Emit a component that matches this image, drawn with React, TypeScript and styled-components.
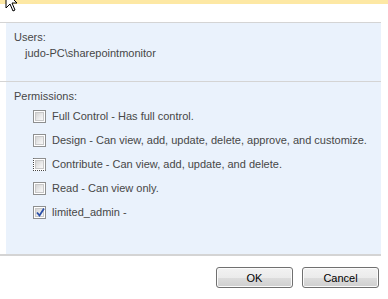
import React from "react";
import styled, { createGlobalStyle } from "styled-components";

const Global = createGlobalStyle`
  html, body { margin: 0; padding: 0; background: #ffffff; }
  body { font-family: "Liberation Sans", Arial, sans-serif; font-size: 11px; color: #474747; }
`;

const Page = styled.div`
  position: relative;
  width: 388px;
  height: 299px;
  overflow: hidden;
  background: #ffffff;
`;

const Notice = styled.div`
  height: 4px;
  background: #fde8a4;
`;

const Gap = styled.div`
  height: 18px;
`;

const Section = styled.div<{ $border: number }>`
  width: 381px;
  border-top: ${(p) => p.$border}px solid #d4d4d4;
  padding-left: 6px;
  box-sizing: border-box;
`;

const Panel = styled.div<{ $top: number; $bottom: number }>`
  background: #eaf2fc;
  padding: ${(p) => p.$top}px 0 ${(p) => p.$bottom}px 8px;
`;

const Label = styled.div`
  line-height: 16px;
  height: 16px;
`;

const UserName = styled.div`
  line-height: 16px;
  padding-left: 11px;
`;

const Row = styled.label`
  display: flex;
  align-items: center;
  height: 24px;
  padding-left: 19px;
  gap: 6px;
`;

const Box = styled.span<{ $focus?: boolean }>`
  position: relative;
  width: 13px;
  height: 13px;
  box-sizing: border-box;
  border: 1px solid #8e8f8f;
  border-left-style: ${(p) => (p.$focus ? "dotted" : "solid")};
  border-bottom-style: ${(p) => (p.$focus ? "dotted" : "solid")};
  border-left-color: ${(p) => (p.$focus ? "#444" : "#8e8f8f")};
  border-bottom-color: ${(p) => (p.$focus ? "#444" : "#8e8f8f")};
  background: #ffffff;
  padding: 1px;
  display: flex;
  flex-shrink: 0;
`;

const BoxInner = styled.span`
  flex: 1;
  background: linear-gradient(135deg, #d4d4d4 0%, #ececec 60%, #f8f8f8 100%);
  border: 1px solid #c8c8c8;
`;

const Check = styled.svg`
  position: absolute;
  left: 1px;
  top: 0px;
`;

const Text = styled.span`
  white-space: nowrap;
`;

const Footer = styled.div`
  width: 381px;
  border-top: 2px solid #d4d4d4;
  display: flex;
  justify-content: flex-end;
  gap: 9px;
  padding: 11px 2px 0 0;
  box-sizing: border-box;
`;

const Button = styled.button`
  width: 77px;
  height: 21px;
  box-sizing: border-box;
  border: 1px solid #707070;
  border-radius: 3px;
  background: linear-gradient(#f2f2f2 0%, #ebebeb 50%, #dddddd 51%, #cfcfcf 100%);
  box-shadow: inset 0 0 0 1px #fbfbfb;
  font-family: "Liberation Sans", Arial, sans-serif;
  font-size: 11px;
  color: #000000;
  padding: 0;
`;

const Cursor = styled.svg`
  position: absolute;
  left: 5px;
  top: -9px;
`;

const perms = [
  { text: "Full Control - Has full control.", checked: false, focus: false },
  { text: "Design - Can view, add, update, delete, approve, and customize.", checked: false, focus: false },
  { text: "Contribute - Can view, add, update, and delete.", checked: false, focus: true },
  { text: "Read - Can view only.", checked: false, focus: false },
  { text: "limited_admin -", checked: true, focus: false },
];

export default function App() {
  return (
    <Page>
      <Global />
      <Notice />
      <Gap />
      <Section $border={1}>
        <Panel $top={6} $bottom={20}>
          <Label>Users:</Label>
          <UserName>judo-PC\sharepointmonitor</UserName>
        </Panel>
      </Section>
      <Section $border={1}>
        <Panel $top={6} $bottom={30}>
          <Label>Permissions:</Label>
          {perms.map((p) => (
            <Row key={p.text}>
              <Box $focus={p.focus}>
                <BoxInner />
                {p.checked && (
                  <Check width="11" height="11" viewBox="0 0 11 11">
                    <path d="M2 5.5 L4.5 8.5 L9 1.5" fill="none" stroke="#2a4fa8" strokeWidth="1.8" />
                  </Check>
                )}
              </Box>
              <Text>{p.text}</Text>
            </Row>
          ))}
        </Panel>
      </Section>
      <Footer>
        <Button>OK</Button>
        <Button>Cancel</Button>
      </Footer>
      <Cursor width="14" height="22" viewBox="0 0 14 22">
        <path d="M1 1 L1 17 L5 13 L8 20 L10 19 L7 12 L12 12 Z" fill="#ffffff" stroke="#000000" strokeWidth="1" />
      </Cursor>
    </Page>
  );
}
